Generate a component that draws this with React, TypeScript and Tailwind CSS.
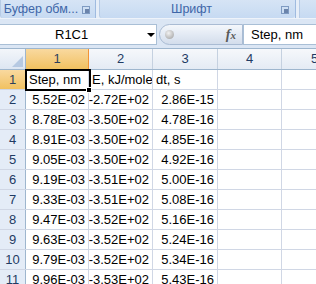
import React from "react";

const rows: [string, string, string][] = [
  ["5.52E-02", "-2.72E+02", "2.86E-15"],
  ["8.78E-03", "-3.50E+02", "4.78E-16"],
  ["8.91E-03", "-3.50E+02", "4.85E-16"],
  ["9.05E-03", "-3.50E+02", "4.92E-16"],
  ["9.19E-03", "-3.51E+02", "5.00E-16"],
  ["9.33E-03", "-3.51E+02", "5.08E-16"],
  ["9.47E-03", "-3.52E+02", "5.16E-16"],
  ["9.63E-03", "-3.52E+02", "5.24E-16"],
  ["9.79E-03", "-3.52E+02", "5.34E-16"],
  ["9.96E-03", "-3.53E+02", "5.43E-16"],
];

function Launcher() {
  return (
    <svg width="8" height="8" viewBox="0 0 8 8" className="shrink-0">
      <rect x="0.5" y="0.5" width="7" height="7" fill="none" stroke="#7f9bc2" />
      <rect x="3" y="3" width="4" height="4" fill="#6b84ab" />
    </svg>
  );
}

function Cell({
  children,
  w,
  align = "right",
}: {
  children?: React.ReactNode;
  w: string;
  align?: "left" | "right";
}) {
  return (
    <div
      className={`${w} shrink-0 h-full border-r border-[#d0d7e5] flex items-center overflow-hidden whitespace-nowrap ${
        align === "right" ? "justify-end pr-[3px]" : "justify-start pl-[3px]"
      }`}
    >
      {children}
    </div>
  );
}

export default function App() {
  return (
    <div
      className="w-[316px] h-[284px] overflow-hidden bg-white relative"
      style={{ fontFamily: '"Liberation Sans", Arial, sans-serif' }}
    >
      {/* Ribbon group labels */}
      <div className="h-[18px] flex bg-[#dfe9f5]">
        <div className="w-[95px] h-full relative flex items-end justify-center pb-[1px] pr-[14px] bg-gradient-to-b from-[#d6e4f5] to-[#c6daf2] border-l border-[#b6cbe6] rounded-bl-[3px]">
          <span className="text-[12.5px] leading-[15px] text-[#3e66a8] whitespace-nowrap">Буфер обм...</span>
          <div className="absolute right-[5px] top-[6px] flex">
            <Launcher />
          </div>
        </div>
        <div className="w-[4px] h-full bg-[#e6eef8] border-l border-[#9fbbe0]" />
        <div className="w-[196px] h-full relative flex items-end justify-center pb-[1px] pr-[12px] bg-gradient-to-b from-[#d6e4f5] to-[#c6daf2] border-l border-[#b6cbe6] rounded-b-[3px]">
          <span className="text-[12.5px] leading-[15px] text-[#3e66a8]">Шрифт</span>
          <div className="absolute right-[6px] top-[6px] flex">
            <Launcher />
          </div>
        </div>
        <div className="w-[4px] h-full bg-[#e6eef8] border-l border-[#9fbbe0]" />
        <div className="flex-1 h-full bg-gradient-to-b from-[#d6e4f5] to-[#c6daf2] border-l border-[#b6cbe6]" />
      </div>

      {/* Formula bar */}
      <div className="h-[30px] bg-[#dbe6f4] border-t border-[#eef3fa] pt-[5px] flex">
        <div className="w-[157px] h-[21px] bg-white border border-[#a9bfd6] border-l-0 flex items-center relative">
          <span className="absolute left-[55px] text-[13px] text-black">R1C1</span>
          <svg width="8" height="5" viewBox="0 0 8 5" className="absolute left-[147px] top-[8px]">
            <path d="M0 0 H8 L4 4 Z" fill="#000" />
          </svg>
        </div>
        <div className="w-[2px]" />
        <div className="w-[84px] h-[21px] rounded-l-[11px] border border-[#a9bbd3] bg-gradient-to-b from-[#f4f7fb] via-[#e3eaf4] to-[#d3ddeb] flex items-center justify-between pl-[5px] pr-[6px]">
          <div className="w-[9px] h-[9px] rounded-full bg-[radial-gradient(circle_at_40%_35%,#f2f2f2,#9a9a9a)]" />
          <span
            className="text-[14px] italic font-bold text-[#5a5a5a] leading-none"
            style={{ fontFamily: '"Liberation Serif", "Times New Roman", serif' }}
          >
            f<span className="text-[11px]">x</span>
          </span>
        </div>
        <div className="flex-1 h-[21px] bg-white border border-[#a9bfd6] border-r-0 flex items-center pl-[7px]">
          <span className="text-[13px] text-black whitespace-nowrap">Step, nm</span>
        </div>
      </div>

      {/* Grid */}
      <div className="border-t border-[#9eb6ce]">
        {/* Header row */}
        <div className="h-[21px] flex border-b border-[#9eb6ce] text-[13px] text-[#1f3b63]">
          <div className="w-[26px] shrink-0 h-full border-r border-[#9eb6ce] bg-gradient-to-b from-[#f3f6fa] to-[#dde6f2] relative">
            <svg width="11" height="11" viewBox="0 0 11 11" className="absolute right-[2px] bottom-[2px]">
              <path d="M11 0 V11 H0 Z" fill="#b6c9e2" />
            </svg>
          </div>
          <div className="w-[63px] shrink-0 h-full border-r border-[#f29436] bg-gradient-to-b from-[#f9d99f] to-[#f1c15f] flex items-center justify-center text-[#2b3f5c]">
            1
          </div>
          <div className="w-[64px] shrink-0 h-full border-r border-[#c5d1e0] bg-gradient-to-b from-[#f6f8fb] to-[#e4ebf4] flex items-center justify-center">
            2
          </div>
          <div className="w-[65px] shrink-0 h-full border-r border-[#c5d1e0] bg-gradient-to-b from-[#f6f8fb] to-[#e4ebf4] flex items-center justify-center">
            3
          </div>
          <div className="w-[64px] shrink-0 h-full border-r border-[#c5d1e0] bg-gradient-to-b from-[#f6f8fb] to-[#e4ebf4] flex items-center justify-center">
            4
          </div>
          <div className="flex-1 h-full bg-gradient-to-b from-[#f6f8fb] to-[#e4ebf4] flex items-center pl-[29px]">
            5
          </div>
        </div>

        {/* Row 1 */}
        <div className="h-[20px] flex border-b border-[#d0d7e5] text-[13px] text-black relative">
          <div className="w-[26px] shrink-0 h-full border-r border-[#f29436] bg-gradient-to-b from-[#f9d99f] to-[#f1c15f] flex items-center justify-center text-[#2b3f5c]">
            1
          </div>
          <Cell w="w-[63px]" align="left">Step, nm</Cell>
          <Cell w="w-[64px]" align="left">E, kJ/mole</Cell>
          <Cell w="w-[65px]" align="left">dt, s</Cell>
          <Cell w="w-[64px]" />
          <div className="flex-1" />
          {/* selection */}
          <div className="absolute left-[25px] top-[-1px] w-[66px] h-[22px] border-2 border-black pointer-events-none" />
          <div className="absolute left-[86px] top-[17px] w-[6px] h-[6px] bg-black border border-white" />
        </div>

        {rows.map((r, i) => (
          <div key={i} className="h-[20px] flex border-b border-[#d0d7e5] text-[13px] text-black">
            <div className="w-[26px] shrink-0 h-full border-r border-[#9eb6ce] bg-[#e4ecf7] flex items-center justify-center text-[#1f3b63]">
              {i + 2}
            </div>
            <Cell w="w-[63px]">{r[0]}</Cell>
            <Cell w="w-[64px]">{r[1]}</Cell>
            <Cell w="w-[65px]">{r[2]}</Cell>
            <Cell w="w-[64px]" />
            <div className="flex-1" />
          </div>
        ))}
      </div>
    </div>
  );
}
